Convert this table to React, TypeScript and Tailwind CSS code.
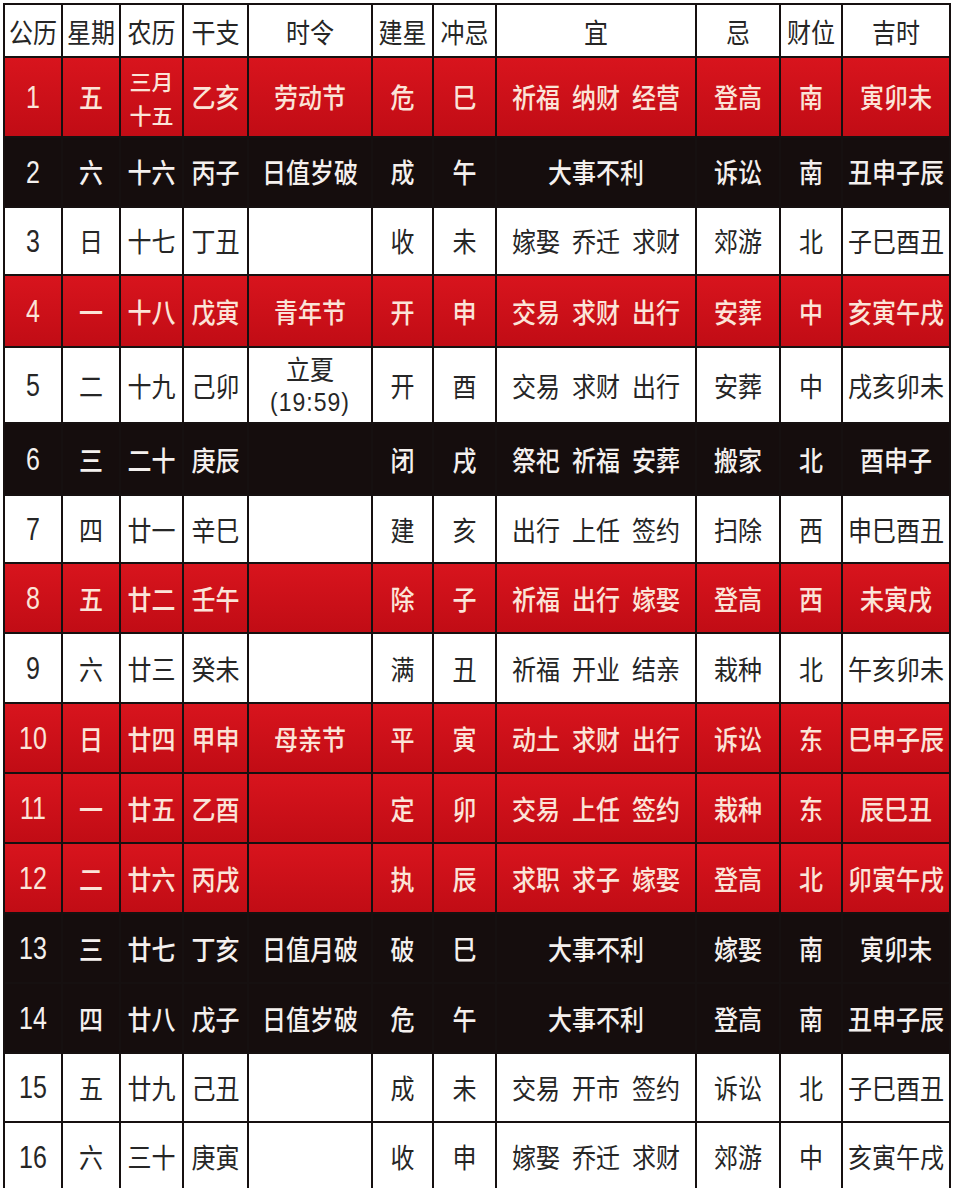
import React from 'react';

type Tone = 'red' | 'black' | 'white';

type Day = {
  d: number;
  wk: string;
  lunar: string[];
  gz: string;
  term: string[];
  star: string;
  clash: string;
  yi: string[] | string;
  ji: string;
  cai: string;
  ji2: string;
  tone: Tone;
  h: string;
};

const cols =
  'grid grid-cols-[56px_56px_61px_63px_122px_59px_61px_198px_82px_60px_106px] gap-[2px]';

const days: Day[] = [
  { d: 1, wk: '五', lunar: ['三月', '十五'], gz: '乙亥', term: ['劳动节'], star: '危', clash: '巳', yi: ['祈福', '纳财', '经营'], ji: '登高', cai: '南', ji2: '寅卯未', tone: 'red', h: 'h-[78px]' },
  { d: 2, wk: '六', lunar: ['十六'], gz: '丙子', term: ['日值岁破'], star: '成', clash: '午', yi: '大事不利', ji: '诉讼', cai: '南', ji2: '丑申子辰', tone: 'black', h: 'h-[68px]' },
  { d: 3, wk: '日', lunar: ['十七'], gz: '丁丑', term: [], star: '收', clash: '未', yi: ['嫁娶', '乔迁', '求财'], ji: '郊游', cai: '北', ji2: '子巳酉丑', tone: 'white', h: 'h-[66px]' },
  { d: 4, wk: '一', lunar: ['十八'], gz: '戊寅', term: ['青年节'], star: '开', clash: '申', yi: ['交易', '求财', '出行'], ji: '安葬', cai: '中', ji2: '亥寅午戌', tone: 'red', h: 'h-[70px]' },
  { d: 5, wk: '二', lunar: ['十九'], gz: '己卯', term: ['立夏', '(19:59)'], star: '开', clash: '酉', yi: ['交易', '求财', '出行'], ji: '安葬', cai: '中', ji2: '戌亥卯未', tone: 'white', h: 'h-[74px]' },
  { d: 6, wk: '三', lunar: ['二十'], gz: '庚辰', term: [], star: '闭', clash: '戌', yi: ['祭祀', '祈福', '安葬'], ji: '搬家', cai: '北', ji2: '酉申子', tone: 'black', h: 'h-[70px]' },
  { d: 7, wk: '四', lunar: ['廿一'], gz: '辛巳', term: [], star: '建', clash: '亥', yi: ['出行', '上任', '签约'], ji: '扫除', cai: '西', ji2: '申巳酉丑', tone: 'white', h: 'h-[66px]' },
  { d: 8, wk: '五', lunar: ['廿二'], gz: '壬午', term: [], star: '除', clash: '子', yi: ['祈福', '出行', '嫁娶'], ji: '登高', cai: '西', ji2: '未寅戌', tone: 'red', h: 'h-[68px]' },
  { d: 9, wk: '六', lunar: ['廿三'], gz: '癸未', term: [], star: '满', clash: '丑', yi: ['祈福', '开业', '结亲'], ji: '栽种', cai: '北', ji2: '午亥卯未', tone: 'white', h: 'h-[68px]' },
  { d: 10, wk: '日', lunar: ['廿四'], gz: '甲申', term: ['母亲节'], star: '平', clash: '寅', yi: ['动土', '求财', '出行'], ji: '诉讼', cai: '东', ji2: '巳申子辰', tone: 'red', h: 'h-[68px]' },
  { d: 11, wk: '一', lunar: ['廿五'], gz: '乙酉', term: [], star: '定', clash: '卯', yi: ['交易', '上任', '签约'], ji: '栽种', cai: '东', ji2: '辰巳丑', tone: 'red', h: 'h-[68px]' },
  { d: 12, wk: '二', lunar: ['廿六'], gz: '丙戌', term: [], star: '执', clash: '辰', yi: ['求职', '求子', '嫁娶'], ji: '登高', cai: '北', ji2: '卯寅午戌', tone: 'red', h: 'h-[68px]' },
  { d: 13, wk: '三', lunar: ['廿七'], gz: '丁亥', term: ['日值月破'], star: '破', clash: '巳', yi: '大事不利', ji: '嫁娶', cai: '南', ji2: '寅卯未', tone: 'black', h: 'h-[68px]' },
  { d: 14, wk: '四', lunar: ['廿八'], gz: '戊子', term: ['日值岁破'], star: '危', clash: '午', yi: '大事不利', ji: '登高', cai: '南', ji2: '丑申子辰', tone: 'black', h: 'h-[68px]' },
  { d: 15, wk: '五', lunar: ['廿九'], gz: '己丑', term: [], star: '成', clash: '未', yi: ['交易', '开市', '签约'], ji: '诉讼', cai: '北', ji2: '子巳酉丑', tone: 'white', h: 'h-[67px]' },
  { d: 16, wk: '六', lunar: ['三十'], gz: '庚寅', term: [], star: '收', clash: '申', yi: ['嫁娶', '乔迁', '求财'], ji: '郊游', cai: '中', ji2: '亥寅午戌', tone: 'white', h: 'h-[68px]' },
];

const headers = ['公历', '星期', '农历', '干支', '时令', '建星', '冲忌', '宜', '忌', '财位', '吉时'];

const toneCell: Record<Tone, string> = {
  red: 'bg-linear-to-b from-[#d8141d] to-[#c10c15] text-[#fbe4d8] font-medium',
  black: 'bg-[#150d0d] text-[#f4f0ee] font-medium',
  white: 'bg-white text-[#262626]',
};

// ── Cell pieces ──

function Txt({ children, className = '' }: { children: React.ReactNode; className?: string }) {
  return <span className={`inline-block scale-y-115 leading-none ${className}`}>{children}</span>;
}

function Cell({ tone, children }: { tone: Tone; children?: React.ReactNode }) {
  return (
    <div className={`flex flex-col items-center justify-center text-[24px] ${toneCell[tone]}`}>
      {children}
    </div>
  );
}

function DayRow({ day }: { day: Day }) {
  const t = day.tone;
  return (
    <div className={`${cols} ${day.h}`}>
      <Cell tone={t}>
        <Txt className="font-['Liberation_Sans_Narrow','Liberation_Sans',sans-serif] text-[25px] scale-y-125">
          {day.d}
        </Txt>
      </Cell>
      <Cell tone={t}>
        <Txt>{day.wk}</Txt>
      </Cell>
      <Cell tone={t}>
        {day.lunar.length > 1 ? (
          <div className="flex flex-col items-center gap-[12px] text-[22px]">
            {day.lunar.map((l) => (
              <span key={l} className="leading-none">
                {l}
              </span>
            ))}
          </div>
        ) : (
          <Txt>{day.lunar[0]}</Txt>
        )}
      </Cell>
      <Cell tone={t}>
        <Txt>{day.gz}</Txt>
      </Cell>
      <Cell tone={t}>
        {day.term.length > 1 ? (
          <div className="flex flex-col items-center gap-[11px]">
            <Txt>{day.term[0]}</Txt>
            <Txt className="font-['Liberation_Sans_Narrow','Liberation_Sans',sans-serif] text-[23px] tracking-[1px]">
              {day.term[1]}
            </Txt>
          </div>
        ) : (
          day.term[0] && <Txt>{day.term[0]}</Txt>
        )}
      </Cell>
      <Cell tone={t}>
        <Txt>{day.star}</Txt>
      </Cell>
      <Cell tone={t}>
        <Txt>{day.clash}</Txt>
      </Cell>
      <Cell tone={t}>
        {typeof day.yi === 'string' ? (
          <Txt>{day.yi}</Txt>
        ) : (
          <div className="flex items-center gap-[12px]">
            {day.yi.map((w, i) => (
              <Txt key={i}>{w}</Txt>
            ))}
          </div>
        )}
      </Cell>
      <Cell tone={t}>
        <Txt>{day.ji}</Txt>
      </Cell>
      <Cell tone={t}>
        <Txt>{day.cai}</Txt>
      </Cell>
      <Cell tone={t}>
        <Txt>{day.ji2}</Txt>
      </Cell>
    </div>
  );
}

export default function App() {
  return (
    <div className="min-h-[1188px] bg-white pl-[3px] pt-[3px] font-['Noto_Sans_CJK_SC','Noto_Sans',sans-serif]">
      <div className="flex w-[948px] flex-col gap-[2px] bg-[#161010] p-[2px]">
        <div className={`${cols} h-[51px]`}>
          {headers.map((h) => (
            <Cell key={h} tone="white">
              <Txt>{h}</Txt>
            </Cell>
          ))}
        </div>
        {days.map((d) => (
          <DayRow key={d.d} day={d} />
        ))}
      </div>
    </div>
  );
}
